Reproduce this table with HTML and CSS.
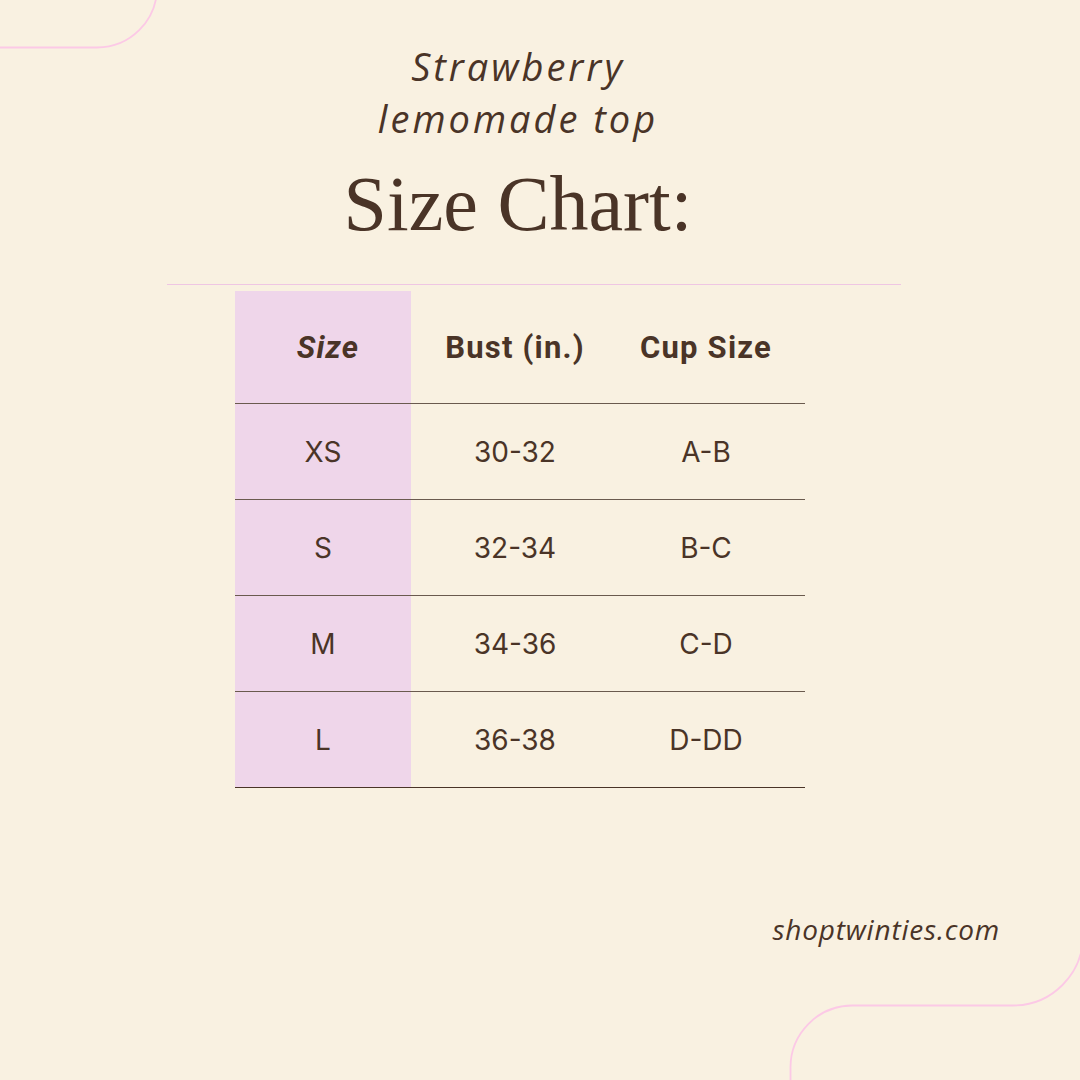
FILE: index.html
```html
<!DOCTYPE html>
<html lang="en">
<head>
<meta charset="utf-8">
<title>Size Chart</title>
<link rel="stylesheet" href="styles.css">
</head>
<body>
<div class="page">
  <svg class="deco deco-tl" width="200" height="80" viewBox="0 0 200 80">
    <path d="M -2 47.5 L 97 47.5 A 60 60 0 0 0 157 -12.5" fill="none" stroke="#fcc9e6" stroke-width="1.8"/>
  </svg>
  <svg class="deco deco-br" width="320" height="160" viewBox="760 920 320 160">
    <path d="M 790.5 1082 L 790.5 1068 A 62 62 0 0 1 852 1005.5 L 1013 1005.5 A 70 70 0 0 0 1083 935.5" fill="none" stroke="#fcc9e6" stroke-width="1.8"/>
  </svg>

  <header class="head">
    <p class="subtitle">Strawberry<br>lemomade top</p>
    <h1 class="title">Size Chart:</h1>
  </header>

  <div class="divider"></div>

  <div class="chart">
    <div class="row row-head">
      <div class="cell cell-size"><em>Size</em></div>
      <div class="cell">Bust (in.)</div>
      <div class="cell cell-cup">Cup Size</div>
    </div>
    <div class="row">
      <div class="cell cell-size">XS</div>
      <div class="cell">30-32</div>
      <div class="cell cell-cup">A-B</div>
    </div>
    <div class="row">
      <div class="cell cell-size">S</div>
      <div class="cell">32-34</div>
      <div class="cell cell-cup">B-C</div>
    </div>
    <div class="row">
      <div class="cell cell-size">M</div>
      <div class="cell">34-36</div>
      <div class="cell cell-cup">C-D</div>
    </div>
    <div class="row row-last">
      <div class="cell cell-size">L</div>
      <div class="cell">36-38</div>
      <div class="cell cell-cup">D-DD</div>
    </div>
  </div>

  <footer class="site">shoptwinties.com</footer>
</div>
</body>
</html>
```

FILE: styles.css
```css
* { box-sizing: border-box; }
html, body { margin: 0; padding: 0; }
body {
  background: #f9f1e1;
  color: #4a3427;
}
.page {
  position: relative;
  width: 1080px;
  height: 1080px;
  overflow: hidden;
  display: flex;
  flex-direction: column;
}
.deco { position: absolute; }
.deco-tl { left: 0; top: 0; }
.deco-br { left: 760px; top: 920px; }

.head {
  width: 1036px;
  text-align: center;
  padding-top: 40px;
}
.subtitle {
  margin: 0;
  font-family: "Open Sans", sans-serif;
  font-style: italic;
  font-size: 38px;
  line-height: 52px;
  letter-spacing: 3px;
}
.title {
  margin: 15px 0 0;
  font-family: "Liberation Serif", serif;
  font-weight: 400;
  font-size: 78px;
  line-height: 90px;
}
.divider {
  margin-top: 35px;
  margin-left: 167px;
  width: 734px;
  height: 1px;
  background: #efc6e3;
}
.chart {
  margin-top: 6px;
  margin-left: 235px;
  width: 570px;
}
.row {
  display: grid;
  grid-template-columns: 176px 208px 186px;
  height: 96px;
  border-bottom: 1px solid #6a5a4e;
  font-family: "Inter", sans-serif;
  font-size: 28px;
}
.row-head {
  height: 113px;
  font-family: "Roboto", sans-serif;
  font-weight: 700;
  font-size: 31px;
  letter-spacing: 1.2px;
}
.row-last { border-bottom-color: #4a3427; }
.cell {
  display: flex;
  align-items: center;
  justify-content: center;
}
.cell-size { background: #efd6ea; }
.row-head .cell-size { padding-left: 10px; }
.cell-cup { padding-right: 12px; }

.site {
  margin-top: 122px;
  padding-right: 80px;
  text-align: right;
  font-family: "Open Sans", sans-serif;
  font-style: italic;
  font-size: 28px;
  letter-spacing: 0.8px;
}
```
